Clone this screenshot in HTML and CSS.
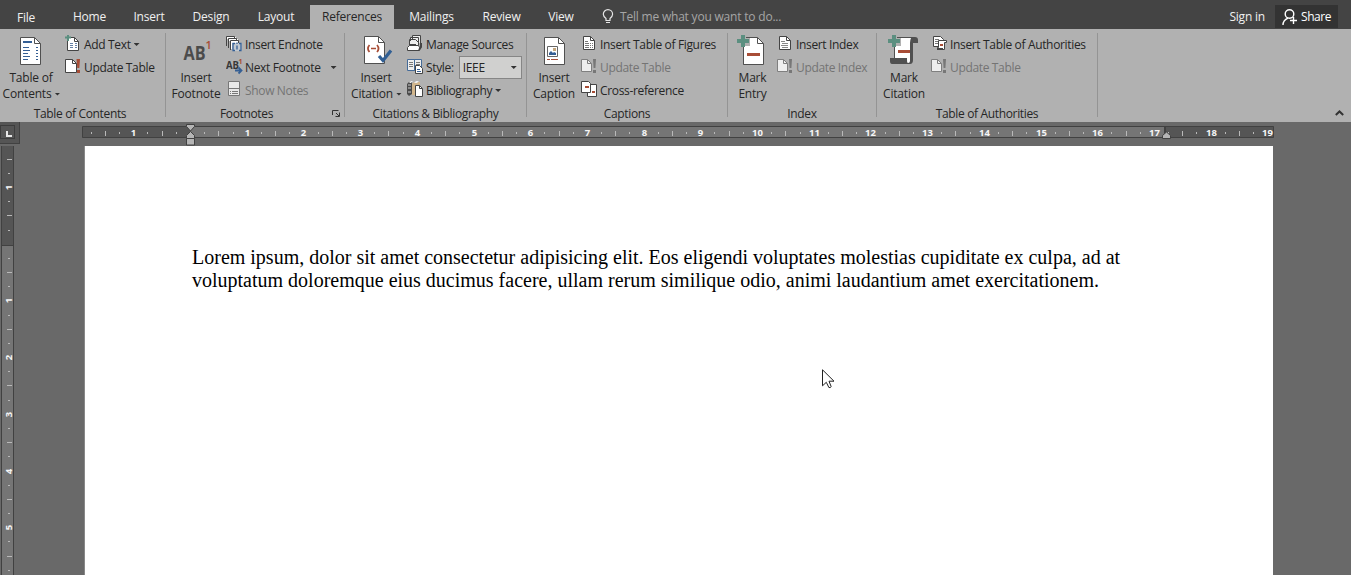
FILE: index.html
```html
<!DOCTYPE html>
<html lang="en">
<head>
<meta charset="utf-8">
<title>Document</title>
<link rel="stylesheet" href="styles.css">
</head>
<body>
<svg width="0" height="0" class="defs">
  <defs>
    <g id="page-sm"><path d="M.5 .5h7l4 4v9h-11z" fill="#fff" stroke="#444"/><path d="M7.500 .5v4h4" fill="none" stroke="#444"/></g>
    <g id="page-lg"><path d="M.5 .5h14l6 6v21h-20z" fill="#fff" stroke="#505050"/><path d="M14.500 .5v6h6" fill="none" stroke="#505050"/></g>
    <g id="plus-lg" fill="#5b8f80"><path d="M4 0h4v4h4v4H8v4H4V8H0V4h4z"/></g>
    <g id="update-off"><path d="M.5 .5h6l4 4v8h-10z" fill="#eee" stroke="#7f7f7f"/><path d="M6.500 .5v4h4" fill="none" stroke="#7f7f7f"/><path d="M12 0h3l-.6 9h-1.800zM12 11h3v3h-3z" fill="#777"/></g>
  </defs>
</svg>
<header class="tabbar">
  <nav class="tabs">
    <a class="tab file">File</a><a class="tab home">Home</a><a class="tab insert">Insert</a><a class="tab design">Design</a><a class="tab layout">Layout</a><a class="tab active">References</a><a class="tab mailings">Mailings</a><a class="tab review">Review</a><a class="tab view">View</a>
  </nav>
  <div class="tellme">
    <svg width="12" height="16" viewBox="0 0 12 16" fill="none" stroke="#e6e6e6"><path d="M4 11.500v-2C2.500 8.300 1.300 7 1.300 5.300a4.600 4.600 0 0 1 9.300 0C10.600 7 9.500 8.300 8 9.500v2z" stroke-width="1.200"/><path d="M4 13.500h4"/></svg>
    <span>Tell me what you want to do...</span>
  </div>
  <div class="account">
    <span>Sign in</span>
    <button class="share"><svg width="16" height="18" viewBox="0 0 16 18" fill="none" stroke="#fff" stroke-width="1.400"><circle cx="7.500" cy="6" r="4.300"/><path d="M1 17c0-3 2-5.500 5-6.800M11.500 9v7M8 12.500h7"/></svg>Share</button>
  </div>
</header>

<section class="ribbon">
  <div class="group g-toc">
    <div class="tools">
      <div class="big"><svg width="62" height="36" viewBox="0 33 62 36"><use href="#page-lg" x="20" y="37"/><path d="M23 41h9v2h-9z" fill="#355f94"/><path d="M23 47.500h6M23 50.500h7M23 53.500h5M23 56.500h7M23 59.500h5M36 47.500h2M36 50.500h2M36 53.500h2M36 56.500h2M36 59.500h2" stroke="#355f94"/></svg><span>Table of</span><span>Contents<i class="caret"></i></span></div>
      <div class="stack">
        <div class="cmd"><svg width="19" height="23" viewBox="65 33 19 23"><use href="#page-sm" x="67" y="37"/><path d="M65 37.500h6M68 35v6" stroke="#5b8f80" stroke-width="2"/><path d="M70 43.500h3M70 45.500h3M70 47.500h3M75 43.500h2M75 45.500h2M75 47.500h2" stroke="#6681a5"/></svg>Add Text<i class="caret"></i></div>
        <div class="cmd"><svg width="19" height="23" viewBox="65 56 19 23"><use href="#page-sm" x="65" y="59"/><path d="M76.500 59h3.500l-.7 9h-2zM77 70h3v3h-3z" fill="#a84d36"/></svg>Update Table</div>
      </div>
    </div>
    <div class="caption">Table of Contents</div>
  </div>
  <div class="group g-foot">
    <div class="tools">
      <div class="big"><svg width="60" height="36" viewBox="166 33 60 36"><text x="183.500" y="60" class="ab-lg" textLength="22" lengthAdjust="spacingAndGlyphs">AB</text><text x="205.600" y="49" class="sup-lg">1</text></svg><span>Insert</span><span>Footnote</span></div>
      <div class="stack">
        <div class="cmd"><svg width="19" height="23" viewBox="226 33 19 23"><path d="M227 37h9v2h-9zM229 39h9v2h-9zM231 41h8v8h-8z" fill="#fff"/><path d="M226.500 46v-9.500h8v2M228.500 48v-9.500h8v2M230.500 50v-9.500h8v3" fill="none" stroke="#444"/><path d="M232 43h10v8h-10z" fill="#c2c9d0"/><path d="M235 43.500h-2v7h2M239 43.500h2v7h-2M237 42.500v1.500M237 45.500v4" fill="none" stroke="#355f94" stroke-width="1.300"/></svg>Insert Endnote</div>
        <div class="cmd"><svg width="19" height="23" viewBox="226 56 19 23"><text x="226" y="69" class="ab-sm" textLength="13" lengthAdjust="spacingAndGlyphs">AB</text><text x="238.500" y="64" class="sup-sm">1</text><path d="M235 70.500h6M238.500 67.500l3 3-3 3" fill="none" stroke="#355f94" stroke-width="1.800"/></svg>Next Footnote<i class="caret far"></i></div>
        <div class="cmd off"><svg width="19" height="23" viewBox="226 79 19 23"><path d="M228.500 81.500h11v14h-11z" fill="#e9e9e9" stroke="#777"/><path d="M229 88.500h10M230 91.500h1M232 91.500h6M230 93.500h1M232 93.500h6" stroke="#777"/></svg>Show Notes</div>
      </div>
    </div>
    <div class="caption">Footnotes<svg class="launcher" width="9" height="9" viewBox="0 0 9 9" fill="none" stroke="#333"><path d="M.5 6V1.500h6M4 4l3 3M7.500 3.500v4h-4"/></svg></div>
  </div>
  <div class="group g-cite">
    <div class="tools">
      <div class="big"><svg width="62" height="36" viewBox="345 33 62 36"><use href="#page-lg" x="364" y="36"/><path d="M369.500 45q-3 3.500 0 7M377 45q3 3.500 0 7M371 48.500h5" fill="none" stroke="#a84d36" stroke-width="1.700"/><path d="M379 56l4 4.500 8-10" fill="none" stroke="#315f94" stroke-width="3.200"/></svg><span>Insert</span><span>Citation<i class="caret"></i></span></div>
      <div class="stack">
        <div class="cmd"><svg width="19" height="23" viewBox="407 33 19 23"><path d="M412.500 39v-3.500h8v8M410.500 41v-3.500h8v9M409.500 46v-6.500h6l3 3v4" fill="#eee" stroke="#444"/><path d="M407.500 50.500v-3l2-2h9l1 2v3z" fill="#fff" stroke="#444"/><path d="M410 44.500h6" stroke="#444"/><path d="M421 43v4l-2 3" stroke="#444" stroke-width="2" fill="none"/></svg>Manage Sources</div>
        <div class="cmd"><svg width="19" height="23" viewBox="407 56 19 23"><path d="M407.500 59.500h7v11h-7zM414.500 59.500h7v11h-7z" fill="#eee" stroke="#456b98"/><path d="M409 62.500h4M409 64.500h4M409 66.500h4M416 62.500h4M416 64.500h4" stroke="#777"/><path d="M415.500 65.500h4l3 3v5h-7z" fill="#fff" stroke="#444"/><path d="M417 69.500h3M417 71.500h4" stroke="#355f94"/></svg>Style:<span class="combo">IEEE<i class="caret"></i></span></div>
        <div class="cmd"><svg width="19" height="23" viewBox="407 79 19 23"><path d="M407 84l2-2h3v12l-3 2-2-2z" fill="#4b4b4b"/><path d="M408 85h3M408 88h3M408 92h3" stroke="#ccc"/><path d="M412 84l2-2h6v3h-4l-1 10h-3z" fill="#d2b68c"/><path d="M409 83l2-2h2l-2 2zM414 83l2-2h3l-2 2z" fill="#eee"/><path d="M415.500 85.500h4l3 3v8h-7z" fill="#fff" stroke="#444"/><path d="M419.500 85.500v3h3" fill="none" stroke="#444"/></svg>Bibliography<i class="caret"></i></div>
      </div>
    </div>
    <div class="caption">Citations &amp; Bibliography</div>
  </div>
  <div class="group g-caps">
    <div class="tools">
      <div class="big"><svg width="54" height="36" viewBox="527 33 54 36"><use href="#page-lg" x="544" y="37"/><path d="M547.500 46.500h10v10h-10z" fill="#fff" stroke="#666"/><path d="M549 55v-2l2-2 2 2 1-1 2 1v2z" fill="#355f94"/><path d="M553 48h3v3h-3z" fill="#c2a57c"/><path d="M547 59.500h3M551 59.500h7" stroke="#a84d36"/></svg><span>Insert</span><span>Caption</span></div>
      <div class="stack">
        <div class="cmd"><svg width="19" height="23" viewBox="581 33 19 23"><use href="#page-sm" x="583" y="36"/><path d="M585 41.500h3M585 43.500h4M585 45.500h4M585 47.500h4M590 43.500h1M592 43.500h1M590 45.500h1M592 45.500h1M590 47.500h1M592 47.500h1" stroke="#777"/></svg>Insert Table of Figures</div>
        <div class="cmd off"><svg width="19" height="23" viewBox="581 56 19 23"><use href="#update-off" x="581" y="59"/></svg>Update Table</div>
        <div class="cmd"><svg width="19" height="23" viewBox="581 79 19 23"><path d="M587.500 84.500h9v12h-9z" fill="#fff" stroke="#444"/><path d="M581.500 81.500h7l2 2v9h-9z" fill="#fff" stroke="#444"/><path d="M585 86h4v2h-4zM592 91h3v2h-3z" fill="#a84d36"/></svg>Cross-reference</div>
      </div>
    </div>
    <div class="caption">Captions</div>
  </div>
  <div class="group g-index">
    <div class="tools">
      <div class="big"><svg width="49" height="36" viewBox="728 33 49 36"><use href="#page-lg" x="743" y="37"/><path d="M740 34h6v4h4v8h-7v3h-5v-12z" fill="#b1b1b1"/><use href="#plus-lg" x="737" y="35"/><path d="M747 53h13v3h-13z" fill="#a84d36"/><path d="M743.500 48v16.500" stroke="#505050"/></svg><span>Mark</span><span>Entry</span></div>
      <div class="stack">
        <div class="cmd"><svg width="19" height="23" viewBox="777 33 19 23"><use href="#page-sm" x="779" y="36"/><path d="M781 41.500h4M782 43.500h6M781 45.500h7M782 47.500h6" stroke="#888"/></svg>Insert Index</div>
        <div class="cmd off"><svg width="19" height="23" viewBox="777 56 19 23"><use href="#update-off" x="777" y="59"/></svg>Update Index</div>
      </div>
    </div>
    <div class="caption">Index</div>
  </div>
  <div class="group g-auth">
    <div class="tools">
      <div class="big"><svg width="54" height="36" viewBox="877 33 54 36"><path d="M894 37h21q3 0 3 3v3h-5v17q0 4-3 4h-16z" fill="#505050"/><path d="M895 38h16q-1 2-1 5v18q0 2-2 2t-2-4h-11z" fill="#fff"/><path d="M890 58h17v2q0 4 2 4h-17q-2 0-2-3z" fill="#505050"/><path d="M891 34h6v4h4v8h-7v3h-5V38z" fill="#b1b1b1"/><use href="#plus-lg" x="888" y="35"/><path d="M898 50h12v3h-12z" fill="#a84d36"/></svg><span>Mark</span><span>Citation</span></div>
      <div class="stack">
        <div class="cmd"><svg width="19" height="23" viewBox="931 33 19 23"><path d="M933.500 36.500h7l3 3v7h-10z" fill="#fff" stroke="#444"/><path d="M935 39.500h4M935 41.500h3M935 43.500h3" stroke="#777"/><path d="M938.500 40.500h8v2h-2v7h-7v-2h1z" fill="#fff" stroke="#444"/><path d="M937 48h6v2h-6z" fill="#444"/><path d="M940 44h3v2h-3z" fill="#a84d36"/></svg>Insert Table of Authorities</div>
        <div class="cmd off"><svg width="19" height="23" viewBox="931 56 19 23"><use href="#update-off" x="931" y="59"/></svg>Update Table</div>
      </div>
    </div>
    <div class="caption">Table of Authorities</div>
  </div>
  <svg class="collapse" width="9" height="6" viewBox="0 0 9 6"><path d="M.8 5l3.700-3.500L8.200 5" fill="none" stroke="#333" stroke-width="2"/></svg>
</section>

<main class="workspace">
  <div class="ruler-row">
    <div class="tabstop"><span></span></div>
    <svg id="hruler" class="hruler" width="1194" height="24" viewBox="82 122 1194 24">
      <path d="M82.500 126.500h1191v11h-1191z" fill="#555" stroke="#414141"/>
      <path d="M190 127h975v10H190z" fill="#757575"/>
      <path d="M1164 126h2v12h-2z" fill="#414141"/>
      <g id="hticks"></g>
      <g fill="#b5b5b5" stroke="#414141"><path d="M186.500 124.500h8v2l-4 4.500-4-4.500z"/><path d="M186.500 138.500v-3l4-4 4 4v3z"/><path d="M186.500 138.500h8v6.500h-8z"/><path d="M1162.500 138.500v-3l4-3.500 4 3.500v3z"/></g>
    </svg>
  </div>
  <div class="canvas">
    <svg class="vruler" width="14" height="429" viewBox="0 146 14 429">
      <path d="M1 146h13v429H1z" fill="#414141"/><path d="M2 146h11v99H2z" fill="#555"/><path d="M2 246h11v329H2z" fill="#757575"/>
      <g id="vticks"></g>
    </svg>
    <article class="sheet">
      <p class="line-a">Lorem ipsum, dolor sit amet consectetur adipisicing elit. Eos eligendi voluptates molestias cupiditate ex culpa, ad at</p>
      <p class="line-b">voluptatum doloremque eius ducimus facere, ullam rerum similique odio, animi laudantium amet exercitationem.</p>
    </article>
  </div>
</main>
<svg class="cursor" width="13" height="20" viewBox="0 0 13 20"><path d="M.5 .8v16l3.800-3.500 2.600 5.200q1.500.5 2.300-.8L7 12.200h5z" fill="#fff" stroke="#222"/></svg>
<script src="ruler.js"></script>
</body>
</html>
```
FILE: styles.css
```css
* { box-sizing: border-box; }
body { margin: 0; width: 1351px; height: 575px; overflow: hidden; background: #696969; color: #262626; font: 12px/16px "Open Sans", "Noto Sans", sans-serif; letter-spacing: -0.2px; }
svg { display: block; flex: none; }
.defs { position: absolute; }

.tabbar { display: flex; height: 29px; background: #444; color: #f0f0f0; }
.tabs { display: flex; padding-top: 5px; }
.tab { display: flex; align-items: center; justify-content: center; height: 24px; white-space: nowrap; }
.file { width: 52px; margin-right: 6px; padding-top: 1px; }
.home { width: 62px; padding-left: 1px; }
.insert { width: 58px; }
.design { width: 66px; }
.layout { width: 64px; margin-right: 2px; }
.active { width: 84px; background: #b1b1b1; color: #262626; }
.mailings { width: 75px; }
.review { width: 65px; }
.view { width: 54px; }
.tellme { display: flex; align-items: center; gap: 6px; margin: 5px 0 0 14px; color: #a6a6a6; }
.account { display: flex; align-items: center; gap: 10px; margin: 5px 13px 1px auto; }
.share { display: flex; align-items: center; gap: 3px; width: 63px; height: 23px; padding: 0 0 0 7px; border: 0; background: #333; color: #fff; font: inherit; letter-spacing: -0.45px; }

.ribbon { position: relative; display: flex; height: 93px; padding-top: 4px; background: #b1b1b1; }
.group { height: 84px; border-right: 1px solid #949494; }
.g-toc { width: 166px; --big: 62px; }
.g-foot { width: 179px; --big: 60px; }
.g-cite { width: 182px; --big: 62px; }
.g-caps { width: 201px; --big: 54px; }
.g-index { width: 149px; --big: 49px; }
.g-auth { width: 221px; --big: 54px; }
.tools { display: flex; height: 72px; }
.g-toc .tools { gap: 3px; }
.big { display: flex; flex-direction: column; align-items: center; width: var(--big); white-space: nowrap; }
.big span { display: flex; align-items: center; height: 16px; }
.big svg + span { margin-top: 1px; }
.cmd { display: flex; align-items: center; height: 23px; white-space: nowrap; letter-spacing: -0.34px; }
.off { color: #747474; }
.caret { flex: none; width: 6px; height: 3px; margin-left: 4px; background: #333; clip-path: polygon(0 0, 100% 0, 50% 100%); }
.big .caret { margin: 0 -1px 0 3px; }
.cmd .caret { margin-left: 3px; }
.cmd .far { margin-left: 10px; }
.combo { display: flex; align-items: center; justify-content: space-between; width: 63px; height: 23px; margin-left: 5px; padding: 0 4px 0 3px; border: 1px solid #868686; background: #d0d0cf; }
.caption { position: relative; height: 16px; padding-top: 1px; text-align: center; letter-spacing: -0.35px; white-space: nowrap; }
.g-toc .caption { padding-right: 5px; }
.g-foot .caption { padding-right: 17px; }
.launcher { position: absolute; right: 3px; top: 4px; }
.collapse { position: absolute; right: 7px; top: 81px; }
.ab-lg { font: bold 19px "Open Sans", sans-serif; letter-spacing: 0; fill: #4b4b4b; }
.sup-lg { font: 600 11px "Open Sans", sans-serif; letter-spacing: 0; fill: #a84d36; }
.ab-sm { font: bold 10px "Open Sans", sans-serif; letter-spacing: 0; fill: #383838; }
.sup-sm { font: bold 7px "Open Sans", sans-serif; letter-spacing: 0; fill: #a84d36; }

.ruler-row { display: flex; height: 24px; }
.tabstop { display: flex; align-items: stretch; width: 20px; height: 22px; margin-right: 62px; padding: 3px 4px 4px 0; border: solid #414141; border-width: 0 1px 1px 0; background: #555; }
.tabstop span { position: relative; flex: 1; border: 1px solid #3d3d3d; background: #555; }
.tabstop span::after { content: ""; position: absolute; left: 5px; top: 5px; width: 6px; height: 6px; border: solid #e8e8e8; border-width: 0 0 2px 2px; box-sizing: border-box; }
.canvas { display: flex; height: 429px; }
.sheet { width: 1189px; margin-left: 70px; padding: 100px 0 0 107px; border-left: 1px solid #888; background: #fff; color: #000; font: 20px/23px "Liberation Serif", serif; letter-spacing: 0; }
.sheet p { margin: 0; white-space: nowrap; }
.num { font: bold 9.5px "Open Sans", sans-serif; letter-spacing: 0; fill: #f5f5f5; text-anchor: middle; }
.tick { fill: #b9b9b9; }
.cursor { position: absolute; left: 822px; top: 369px; }
```
FILE: ruler.js
```js
const NS = "http://www.w3.org/2000/svg";
const QUARTER = 56.7 / 4;

function add(parent, tag, attrs, text) {
  const el = document.createElementNS(NS, tag);
  for (const key in attrs) el.setAttribute(key, attrs[key]);
  if (text !== undefined) el.textContent = text;
  parent.appendChild(el);
}

const h = document.getElementById("hticks");
for (let i = -7; i <= 76; i++) {
  if (i === 0) continue;
  const x = Math.floor(190.5 + i * QUARTER);
  if (i % 4 === 0) add(h, "text", { x: x + 0.5, y: 136, class: "num" }, Math.abs(i / 4));
  else if (i % 2 === 0) add(h, "rect", { x, y: 131, width: 1, height: 5, class: "tick" });
  else add(h, "rect", { x, y: 132, width: 1, height: 2, class: "tick" });
}

const v = document.getElementById("vticks");
for (let i = -6; i <= 23; i++) {
  if (i === 0) continue;
  const y = Math.floor(244.2 + i * QUARTER);
  if (i % 4 === 0) add(v, "text", { transform: `translate(12 ${y + 0.5}) rotate(-90)`, class: "num" }, Math.abs(i / 4));
  else if (i % 2 === 0) add(v, "rect", { x: 7, y, width: 5, height: 1, class: "tick" });
  else add(v, "rect", { x: 8, y, width: 2, height: 1, class: "tick" });
}
```
